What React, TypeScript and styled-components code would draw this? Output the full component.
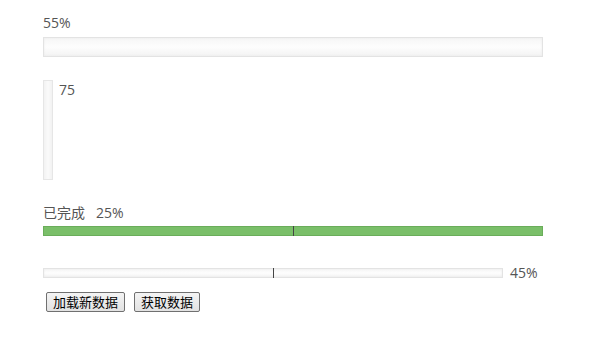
import React from 'react';
import styled, { createGlobalStyle } from 'styled-components';

const Global = createGlobalStyle`
    body {
        margin: 0;
        background: #fff;
        font-family: "Open Sans", "Noto Sans CJK SC", sans-serif;
        color: #555;
    }
`;

const Page = styled.div`
    width: 592px;
    height: 353px;
    box-sizing: border-box;
    padding: 13px 0 0 43px;
    display: flex;
    flex-direction: column;
`;

const Label = styled.div`
    font-size: 14px;
    line-height: 20px;
    color: #555;
    white-space: pre;
`;

const HBar = styled.div<{ $w: number; $h: number; $green?: boolean }>`
    position: relative;
    width: ${p => p.$w}px;
    height: ${p => p.$h}px;
    box-sizing: border-box;
    border: 1px solid ${p => (p.$green ? '#6aad5a' : '#e3e3e3')};
    background: ${p => (p.$green ? '#7abf69' : 'linear-gradient(#f6f6f6, #fdfdfd 50%, #f3f3f3)')};
    box-shadow: ${p => (p.$green ? 'none' : 'inset 0 0 2px #e8e8e8')};
`;

const Tick = styled.span`
    position: absolute;
    left: 50%;
    top: -1px;
    bottom: -1px;
    width: 1px;
    background: #444;
`;

const VRow = styled.div`
    display: flex;
    gap: 6px;
    margin-top: 23px;
`;

const VBar = styled.div`
    width: 10px;
    height: 100px;
    box-sizing: border-box;
    border: 1px solid #e6e6e6;
    background: linear-gradient(90deg, #f2f2f2, #fafafa 50%, #f2f2f2);
`;

const Section = styled.div<{ $top: number }>`
    margin-top: ${p => p.$top}px;
`;

const Row = styled.div`
    display: flex;
    align-items: center;
    gap: 7px;
`;

const Buttons = styled.div`
    display: flex;
    gap: 9px;
    margin: 9px 0 0 3px;
`;

const Button = styled.button`
    height: 20px;
    padding: 0 6px;
    border: 1px solid #707070;
    border-radius: 2px;
    background: linear-gradient(#f4f4f4, #e2e2e2);
    font-family: "Noto Sans CJK SC", sans-serif;
    font-size: 13px;
    line-height: 18px;
    color: #000;
`;

export default function App() {
    return (
        <Page>
            <Global />
            <Label>55%</Label>
            <HBar $w={500} $h={20} style={{ marginTop: 4 }} />
            <VRow>
                <VBar />
                <Label>75</Label>
            </VRow>
            <Section $top={23}>
                <Label>{'已完成   25%'}</Label>
                <HBar $w={500} $h={10} $green style={{ marginTop: 3 }}>
                    <Tick />
                </HBar>
            </Section>
            <Section $top={27}>
                <Row>
                    <HBar $w={460} $h={10}>
                        <Tick />
                    </HBar>
                    <Label>45%</Label>
                </Row>
            </Section>
            <Buttons>
                <Button>加载新数据</Button>
                <Button>获取数据</Button>
            </Buttons>
        </Page>
    );
}
